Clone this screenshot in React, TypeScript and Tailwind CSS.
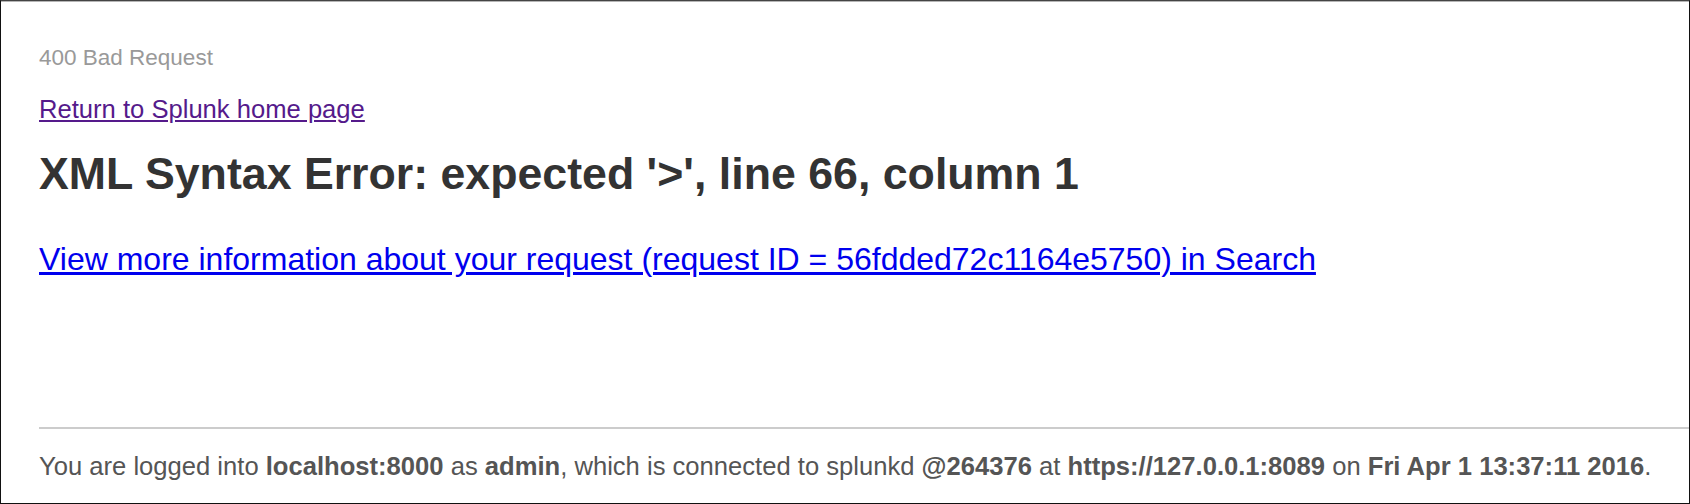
export default function App() {
  return (
    <div className="h-[504px] w-full border border-l-[#111] border-t-[#444] border-r-[#111] border-b-[#111] bg-white font-['Liberation_Sans',Arial,Helvetica,sans-serif]">
      <div className="h-full border-t border-[#b5b5b5] pl-[38px] pt-[41px]">
        <div className="h-[30px] text-[22.5px] leading-[30px] text-[#999]">400 Bad Request</div>

        <div className="mt-[21px] h-[30px] text-[25.6px] leading-[30px]">
          <a href="#" className="text-[#551a8b] underline">
            Return to Splunk home page
          </a>
        </div>

        <h1 className="mt-[24px] h-[52px] text-[44.7px] font-bold leading-[52px] text-[#333]">
          XML Syntax Error: expected '&gt;', line 66, column 1
        </h1>

        <div className="mt-[40px] h-[38px] text-[32px] leading-[38px]">
          <a href="#" className="text-[#0000ee] underline">
            View more information about your request (request ID = 56fdded72c1164e5750) in Search
          </a>
        </div>

        <hr className="mt-[149px] h-[2px] border-0 bg-[#cccccc]" />

        <p className="mt-[22px] h-[30px] text-[25.6px] leading-[30px] text-[#555]">
          You are logged into <b>localhost:8000</b> as <b>admin</b>, which is connected to splunkd{" "}
          <b>@264376</b> at <b>https://127.0.0.1:8089</b> on <b>Fri Apr 1 13:37:11 2016</b>.
        </p>
      </div>
    </div>
  );
}
